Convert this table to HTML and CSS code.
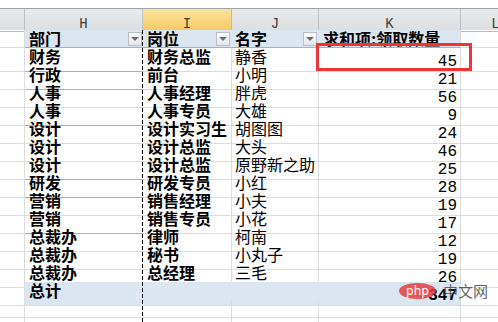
FILE: index.html
```html
<!DOCTYPE html>
<html lang="zh">
<head>
<meta charset="utf-8">
<link rel="stylesheet" href="styles.css">
</head>
<body>
<div class="sheet">
  <div class="row colhdr">
    <div></div><div>H</div><div class="sel">I</div><div>J</div><div>K</div><div>L</div>
  </div>
  <div class="row phdr">
    <div></div>
    <div class="lbl"><span>部门</span><span class="fbtn"><i></i></span></div>
    <div class="lbl"><span>岗位</span><span class="fbtn"><i></i></span></div>
    <div class="lbl nm"><span>名字</span><span class="fbtn"><i></i></span></div>
    <div class="lbl">求和项:领取数量</div>
    <div></div>
  </div>
  <div class="row grp"><div></div><div class="b">财务</div><div class="b">财务总监</div><div class="nm">静香</div><div class="num">45</div><div></div></div>
  <div class="row grp"><div></div><div class="b">行政</div><div class="b">前台</div><div class="nm">小明</div><div class="num">21</div><div></div></div>
  <div class="row"><div></div><div class="b">人事</div><div class="b">人事经理</div><div class="nm">胖虎</div><div class="num">56</div><div></div></div>
  <div class="row grp"><div></div><div class="b">人事</div><div class="b">人事专员</div><div class="nm">大雄</div><div class="num">9</div><div></div></div>
  <div class="row"><div></div><div class="b">设计</div><div class="b">设计实习生</div><div class="nm">胡图图</div><div class="num">24</div><div></div></div>
  <div class="row"><div></div><div class="b">设计</div><div class="b">设计总监</div><div class="nm">大头</div><div class="num">46</div><div></div></div>
  <div class="row grp"><div></div><div class="b">设计</div><div class="b">设计总监</div><div class="nm">原野新之助</div><div class="num">25</div><div></div></div>
  <div class="row grp"><div></div><div class="b">研发</div><div class="b">研发专员</div><div class="nm">小红</div><div class="num">28</div><div></div></div>
  <div class="row"><div></div><div class="b">营销</div><div class="b">销售经理</div><div class="nm">小夫</div><div class="num">19</div><div></div></div>
  <div class="row grp"><div></div><div class="b">营销</div><div class="b">销售专员</div><div class="nm">小花</div><div class="num">17</div><div></div></div>
  <div class="row"><div></div><div class="b">总裁办</div><div class="b">律师</div><div class="nm">柯南</div><div class="num">12</div><div></div></div>
  <div class="row"><div></div><div class="b">总裁办</div><div class="b">秘书</div><div class="nm">小丸子</div><div class="num">19</div><div></div></div>
  <div class="row last"><div></div><div class="b">总裁办</div><div class="b">总经理</div><div class="nm">三毛</div><div class="num">26</div><div></div></div>
  <div class="row total"><div></div><div class="b">总计</div><div></div><div></div><div class="num bnum">347</div><div></div></div>
  <div class="row"><div></div><div></div><div></div><div></div><div></div><div></div></div>
  <div class="row"><div></div><div></div><div></div><div></div><div></div><div></div></div>
</div>
<div class="redbox"></div>
<div class="wm"><span class="wm-php">php</span><span class="wm-txt">中文网</span></div>
</body>
</html>
```

FILE: styles.css
```css
* { box-sizing: border-box; }
html, body { margin: 0; padding: 0; background: #fff; }
body {
  width: 498px;
  height: 322px;
  overflow: hidden;
  position: relative;
  font-family: "Noto Sans CJK SC", "Noto Sans", sans-serif;
  color: #000;
}
.sheet { width: 531px; padding-top: 8px; }
.row {
  display: grid;
  grid-template-columns: 25px 118px 89px 87px 142px 70px;
  height: 18px;
}
.row > div {
  border-right: 1px solid #dadcdd;
  border-bottom: 1px solid #dadcdd;
  white-space: nowrap;
  font-size: 16px;
  line-height: 17px;
}
/* page-break dashed line between H and I */
.row:not(.colhdr) > div:nth-child(2) {
  border-right: none;
  background-image: linear-gradient(to bottom, #000 0 4px, transparent 4px 6px);
  background-size: 1px 6px;
  background-position: right top;
  background-repeat: repeat-y;
}

/* column letters */
.colhdr { height: 22px; border-top: 1px solid #9ea2a7; background: linear-gradient(#e8eaed, #dcdfe3); }
.colhdr > div {
  border-right-color: #bcc0c6;
  border-bottom-color: #b6bbc2;
  font-family: "Liberation Mono", monospace;
  font-size: 14px;
  line-height: 14px;
  padding-top: 8px;
  text-align: center;
  color: #3a3a3a;
}
.colhdr > .sel {
  background: linear-gradient(#fbe49a, #f6c965);
  border-right-color: #e9b656;
  border-bottom-color: #e2a844;
}

/* pivot header row */
.phdr > div:nth-child(n+2):nth-child(-n+5) {
  background-color: #dce6f1;
  border-bottom-color: #95b3d7;
}
.phdr > div:nth-child(3),
.phdr > div:nth-child(4) { border-right-color: #dce6f1; }
.lbl {
  font-weight: 700;
  padding-left: 4px;
}
.phdr .lbl:not(:nth-child(5)) {
  display: flex;
  justify-content: space-between;
  align-items: center;
  padding-right: 1px;
}
.phdr > .nm { padding-left: 3px; }
.fbtn {
  width: 14px;
  height: 14px;
  border: 1px solid #b9bec6;
  background: linear-gradient(#fdfdfe, #e3e6eb);
  display: flex;
  align-items: center;
  justify-content: center;
}
.fbtn i {
  width: 0; height: 0;
  border-left: 4px solid transparent;
  border-right: 4px solid transparent;
  border-top: 4px solid #6a6e74;
}

.b { font-weight: 700; padding-left: 4px; }
.nm { padding-left: 3px; }
.num {
  font-family: "Liberation Mono", monospace;
  font-size: 13px;
  line-height: 13px;
  padding-top: 6px;
  padding-right: 3px;
  text-align: right;
}
.bnum { font-weight: 700; }

.grp > div:nth-child(2) { border-bottom-color: #95b3d7; }
.last > div:nth-child(n+2):nth-child(-n+5) { border-bottom-color: #95b3d7; }
.total > div:nth-child(n+2):nth-child(-n+5) { background-color: #dce6f1; }
.total > div:nth-child(3),
.total > div:nth-child(4) { border-right-color: #dce6f1; }

/* annotation overlay */
.redbox {
  position: absolute;
  left: 316px;
  top: 43px;
  width: 156px;
  height: 28px;
  border: 3px solid #ee3535;
}

/* watermark overlay */
.wm {
  position: absolute;
  left: 399px;
  top: 283px;
  display: flex;
  align-items: center;
  gap: 7px;
}
.wm-php {
  width: 37px;
  height: 16px;
  border-radius: 50%;
  background: rgba(230, 60, 60, 0.85);
  color: #fff;
  font-family: "DejaVu Sans", sans-serif;
  font-size: 12px;
  line-height: 16px;
  text-align: center;
}
.wm-txt {
  font-family: "Noto Sans CJK SC", sans-serif;
  font-size: 15px;
  line-height: 16px;
  color: rgba(70, 70, 70, 0.85);
}
```
